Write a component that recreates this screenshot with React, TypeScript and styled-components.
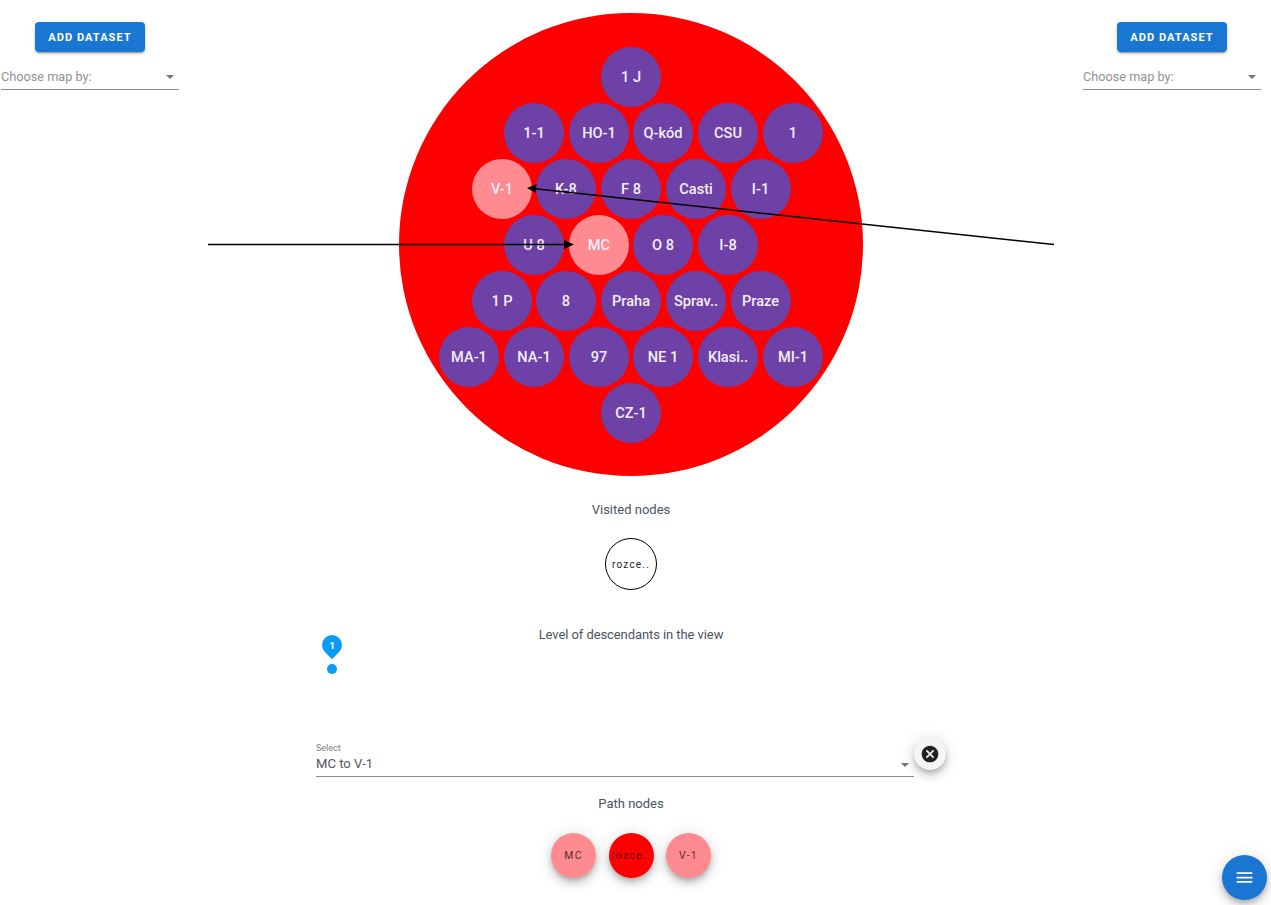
import styled, { createGlobalStyle } from "styled-components";

const GlobalStyle = createGlobalStyle`
  html, body {
    margin: 0;
    padding: 0;
    background: #fff;
    font-family: Roboto, "Liberation Sans", sans-serif;
  }
`;

const NODE_SIZE = 60;

type GraphNode = { label: string; x: number; y: number; active?: boolean };

// centres, relative to the red circle
const nodes: GraphNode[] = [
  { label: "1 J", x: 232, y: 64 },
  { label: "1-1", x: 135, y: 120 },
  { label: "HO-1", x: 200, y: 120 },
  { label: "Q-kód", x: 264, y: 120 },
  { label: "CSU", x: 329, y: 120 },
  { label: "1", x: 394, y: 120 },
  { label: "V-1", x: 103, y: 176, active: true },
  { label: "K-8", x: 167, y: 176 },
  { label: "F 8", x: 232, y: 176 },
  { label: "Casti", x: 297, y: 176 },
  { label: "I-1", x: 361.5, y: 176 },
  { label: "U 8", x: 135, y: 232 },
  { label: "MC", x: 200, y: 232, active: true },
  { label: "O 8", x: 264, y: 232 },
  { label: "I-8", x: 329, y: 232 },
  { label: "1 P", x: 103, y: 288 },
  { label: "8", x: 167, y: 288 },
  { label: "Praha", x: 232, y: 288 },
  { label: "Sprav..", x: 297, y: 288 },
  { label: "Praze", x: 361.5, y: 288 },
  { label: "MA-1", x: 70, y: 344 },
  { label: "NA-1", x: 135, y: 344 },
  { label: "97", x: 200, y: 344 },
  { label: "NE 1", x: 264, y: 344 },
  { label: "Klasi..", x: 329, y: 344 },
  { label: "MI-1", x: 394, y: 344 },
  { label: "CZ-1", x: 232, y: 400 },
];

const Page = styled.div`
  position: relative;
  width: 1271px;
  height: 905px;
  overflow: hidden;
`;

const TopRow = styled.div`
  position: relative;
  width: 100%;
  display: flex;
  justify-content: space-between;
  align-items: flex-start;
  padding: 13px 10px 0 1px;
  box-sizing: border-box;
`;

const SidePanel = styled.div`
  width: 178px;
  padding-top: 9px;
  display: flex;
  flex-direction: column;
  align-items: center;
`;

const DatasetButton = styled.button`
  width: 110px;
  height: 30px;
  border: 0;
  border-radius: 4px;
  background: #1976d2;
  color: #fff;
  font-family: Roboto, sans-serif;
  font-size: 11.1px;
  font-weight: 700;
  letter-spacing: 1px;
  text-transform: uppercase;
  box-shadow: 0 3px 1px -2px rgba(0, 0, 0, 0.2), 0 2px 2px rgba(0, 0, 0, 0.14), 0 1px 5px rgba(0, 0, 0, 0.12);
`;

const MapSelect = styled.div`
  width: 100%;
  height: 27px;
  margin-top: 11px;
  box-sizing: border-box;
  display: flex;
  align-items: center;
  justify-content: space-between;
  padding: 0 5px 0 0;
  border-bottom: 1px solid #8c8c8c;
  color: #929292;
  font-size: 12.7px;
`;

const Caret = styled.span`
  width: 0;
  height: 0;
  margin-top: 2px;
  border-left: 4px solid transparent;
  border-right: 4px solid transparent;
  border-top: 4px solid #757575;
`;

const BigCircle = styled.div`
  position: relative;
  width: 464px;
  height: 463px;
  border-radius: 50%;
  background: #ff0000;
`;

const Node = styled.div<{ $active?: boolean }>`
  position: absolute;
  width: ${NODE_SIZE}px;
  height: ${NODE_SIZE}px;
  border-radius: 50%;
  display: flex;
  align-items: center;
  justify-content: center;
  background: ${(p) => (p.$active ? "#ff8a8f" : "#6d41a6")};
  color: #f3eefa;
  font-size: 14.6px;
  font-weight: 500;
`;

const ArrowLayer = styled.svg`
  position: absolute;
  left: 0;
  top: 0;
  pointer-events: none;
`;

const Lower = styled.div`
  width: 1262px;
  display: flex;
  flex-direction: column;
  align-items: center;
`;

const Caption = styled.div`
  color: #4a5560;
  font-size: 13px;
  line-height: 16px;
  text-align: center;
`;

const VisitedCaption = styled(Caption)`
  margin-top: 26px;
`;

const VisitedNode = styled.div`
  width: 52px;
  height: 52px;
  margin-top: 20px;
  box-sizing: border-box;
  border: 1px solid #000;
  border-radius: 50%;
  display: flex;
  align-items: center;
  justify-content: center;
  font-size: 10px;
  letter-spacing: 1.2px;
  color: #222;
`;

const LevelCaption = styled(Caption)`
  margin-top: 37px;
  letter-spacing: -0.08px;
`;

const SliderArea = styled.div`
  position: relative;
  width: 630px;
  height: 100px;
`;

const SliderBubble = styled.div`
  position: absolute;
  left: 6px;
  top: -8px;
  width: 20px;
  height: 20px;
  border-radius: 50% 50% 50% 0;
  background: #0a9bf7;
  transform: rotate(-45deg);
  display: flex;
  align-items: center;
  justify-content: center;
`;

const BubbleText = styled.span`
  transform: rotate(45deg);
  color: #fff;
  font-size: 9.5px;
  font-weight: 700;
`;

const SliderThumb = styled.div`
  position: absolute;
  left: 11px;
  top: 21px;
  width: 10px;
  height: 10px;
  border-radius: 50%;
  background: #0a9bf7;
`;

const SelectRow = styled.div`
  position: relative;
  width: 598px;
  height: 34px;
  margin-left: -32px;
  box-sizing: border-box;
  border-bottom: 1px solid #8c8c8c;
  display: flex;
  flex-direction: column;
`;

const SelectLabel = styled.div`
  color: #7d7d7d;
  font-size: 9px;
  line-height: 10px;
`;

const SelectValue = styled.div`
  display: flex;
  align-items: center;
  justify-content: space-between;
  padding: 2px 5px 0 0;
  color: #555;
  font-size: 13.1px;
  line-height: 18px;
`;

const ClearButton = styled.div`
  position: absolute;
  left: 598px;
  top: -5px;
  width: 32px;
  height: 32px;
  border-radius: 50%;
  background: #f5f5f5;
  display: flex;
  align-items: center;
  justify-content: center;
  box-shadow: 0 3px 5px -1px rgba(0, 0, 0, 0.2), 0 6px 10px rgba(0, 0, 0, 0.14), 0 1px 18px rgba(0, 0, 0, 0.12);
`;

const PathCaption = styled(Caption)`
  margin-top: 19px;
`;

const PathRow = styled.div`
  display: flex;
  gap: 12.5px;
  margin-top: 21px;
`;

const PathNode = styled.div<{ $red?: boolean }>`
  width: 45px;
  height: 45px;
  border-radius: 50%;
  display: flex;
  align-items: center;
  justify-content: center;
  background: ${(p) => (p.$red ? "#ff0000" : "#ff8a8f")};
  color: rgba(0, 0, 0, 0.72);
  font-size: 10.4px;
  letter-spacing: 1.3px;
  white-space: nowrap;
  box-shadow: 0 3px 5px -1px rgba(0, 0, 0, 0.2), 0 6px 10px rgba(0, 0, 0, 0.14), 0 1px 18px rgba(0, 0, 0, 0.12);
`;

const Fab = styled.div`
  position: absolute;
  left: 1222px;
  top: 855px;
  width: 45px;
  height: 45px;
  border-radius: 50%;
  background: #1976d2;
  display: flex;
  align-items: center;
  justify-content: center;
  box-shadow: 0 3px 5px -1px rgba(0, 0, 0, 0.2), 0 6px 10px rgba(0, 0, 0, 0.14), 0 1px 18px rgba(0, 0, 0, 0.12);
`;

function Side() {
  return (
    <SidePanel>
      <DatasetButton>Add dataset</DatasetButton>
      <MapSelect>
        Choose map by:
        <Caret />
      </MapSelect>
    </SidePanel>
  );
}

function App() {
  return (
    <Page>
      <GlobalStyle />
      <TopRow>
        <Side />
        <BigCircle>
          {nodes.map((n) => (
            <Node
              key={n.label}
              $active={n.active}
              style={{ left: n.x - NODE_SIZE / 2, top: n.y - NODE_SIZE / 2 }}
            >
              {n.label}
            </Node>
          ))}
        </BigCircle>
        <Side />
        <ArrowLayer width="1271" height="480" viewBox="0 0 1271 480">
          <line x1="208" y1="244.5" x2="566" y2="244.5" stroke="#000" strokeWidth="1.5" />
          <polygon points="574,244.5 564,240 564,249" fill="#000" />
          <line x1="1054" y1="244.5" x2="533" y2="188.6" stroke="#000" strokeWidth="1.5" />
          <polygon points="527,188 536.5,184 535.5,193" fill="#000" />
        </ArrowLayer>
      </TopRow>
      <Lower>
        <VisitedCaption>Visited nodes</VisitedCaption>
        <VisitedNode>rozce..</VisitedNode>
        <LevelCaption>Level of descendants in the view</LevelCaption>
        <SliderArea>
          <SliderBubble>
            <BubbleText>1</BubbleText>
          </SliderBubble>
          <SliderThumb />
        </SliderArea>
        <SelectRow>
          <SelectLabel>Select</SelectLabel>
          <SelectValue>
            MC to V-1
            <Caret />
          </SelectValue>
          <ClearButton>
            <svg width="20" height="20" viewBox="0 0 24 24">
              <path
                fill="#212121"
                d="M12 2C6.47 2 2 6.47 2 12s4.47 10 10 10 10-4.47 10-10S17.53 2 12 2zm5 13.59L15.59 17 12 13.41 8.41 17 7 15.59 10.59 12 7 8.41 8.41 7 12 10.59 15.59 7 17 8.41 13.41 12 17 15.59z"
              />
            </svg>
          </ClearButton>
        </SelectRow>
        <PathCaption>Path nodes</PathCaption>
        <PathRow>
          <PathNode>MC</PathNode>
          <PathNode $red>rozce..</PathNode>
          <PathNode>V-1</PathNode>
        </PathRow>
      </Lower>
      <Fab>
        <svg width="21" height="21" viewBox="0 0 24 24">
          <path fill="#fff" d="M3 18h18v-2H3v2zm0-5h18v-2H3v2zm0-7v2h18V6H3z" />
        </svg>
      </Fab>
    </Page>
  );
}

export default App;
